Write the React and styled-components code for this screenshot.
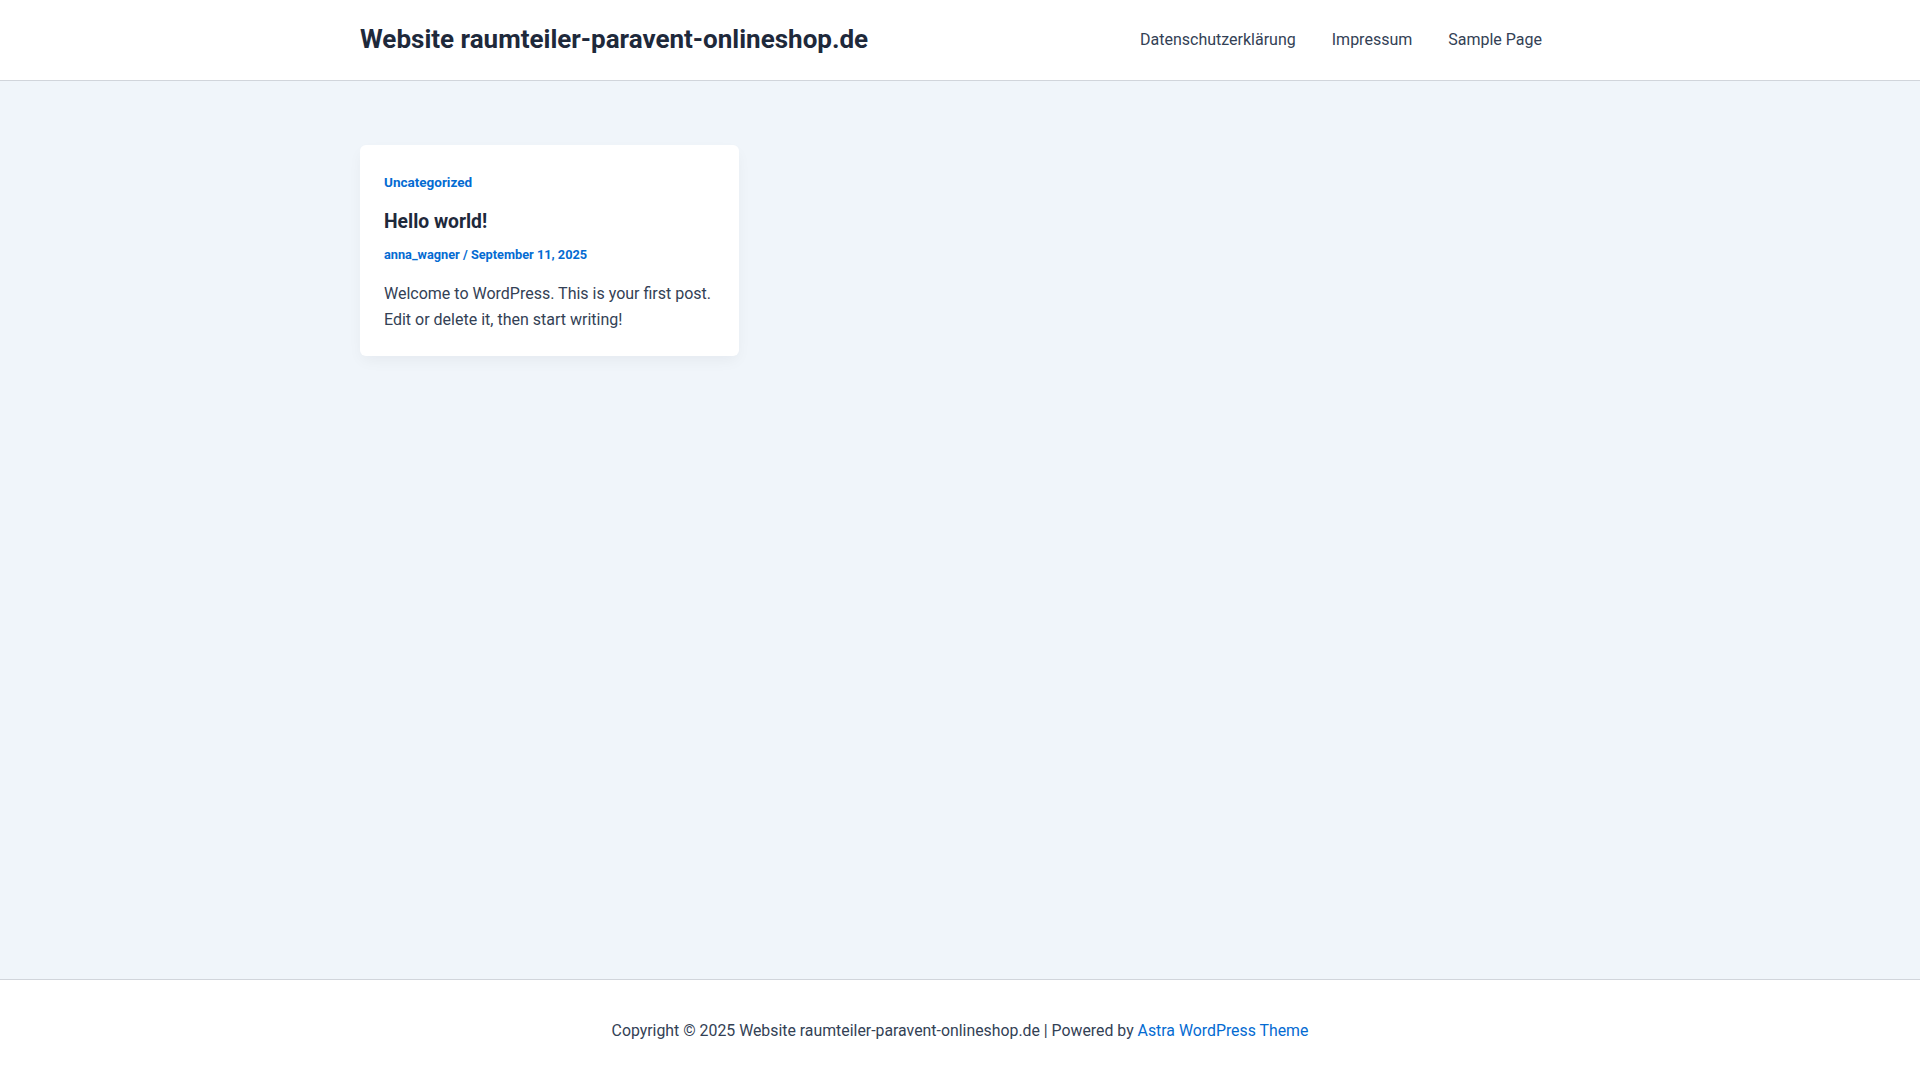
import React from 'react';
import styled, { createGlobalStyle } from 'styled-components';

const GlobalStyle = createGlobalStyle`
  html, body {
    margin: 0;
    padding: 0;
  }
  body {
    font-family: Roboto, "Liberation Sans", sans-serif;
    background: #f0f5fa;
    color: #334155;
    -webkit-font-smoothing: antialiased;
  }
  a {
    text-decoration: none;
  }
`;

const Page = styled.div`
  min-height: 100vh;
  display: flex;
  flex-direction: column;
`;

const Container = styled.div`
  width: 1200px;
  margin: 0 auto;
`;

const Header = styled.header`
  background: #ffffff;
  border-bottom: 1px solid #d1d5db;
`;

const HeaderBar = styled(Container)`
  height: 80px;
  display: flex;
  align-items: center;
  justify-content: space-between;
`;

const SiteTitle = styled.a`
  font-size: 26px;
  font-weight: 700;
  color: #1e293b;
  line-height: 1;
  margin-top: -2px;
`;

const Nav = styled.nav`
  display: flex;
  align-items: center;
`;

const NavLink = styled.a`
  font-size: 16px;
  color: #334155;
  padding: 0 18px;
  line-height: 80px;
`;

const Main = styled.main`
  flex: 1;
  padding: 64px 0;
`;

const Grid = styled(Container)`
  display: grid;
  grid-template-columns: repeat(3, 379px);
  column-gap: 31.5px;
`;

const Card = styled.article`
  background: #ffffff;
  border-radius: 6px;
  padding: 24px;
  box-shadow: 0 6px 15px -2px rgba(16, 24, 40, 0.05);
`;

const Category = styled.a`
  display: block;
  font-size: 13.5px;
  font-weight: 700;
  line-height: 26px;
  color: #046bd2;
`;

const PostTitle = styled.h2`
  margin: 14px 0 0;
  font-size: 19.3px;
  font-weight: 700;
  line-height: 26px;
  color: #1e293b;
`;

const Meta = styled.div`
  margin-top: 7px;
  font-size: 12.75px;
  font-weight: 700;
  line-height: 26px;
  color: #046bd2;

  a {
    color: #046bd2;
  }
`;

const Excerpt = styled.p`
  margin: 13px 0 0;
  font-size: 16px;
  line-height: 25.6px;
  color: #334155;
`;

const Footer = styled.footer`
  background: #ffffff;
  border-top: 1px solid #d1d5db;
  height: 100px;
  display: flex;
  align-items: center;
  justify-content: center;
  font-size: 15.85px;
  color: #334155;
`;

const FooterLink = styled.a`
  color: #046bd2;
`;

const navItems = ['Datenschutzerklärung', 'Impressum', 'Sample Page'];

export default function App() {
  return (
    <Page>
      <GlobalStyle />
      <Header>
        <HeaderBar>
          <SiteTitle href="#">Website raumteiler-paravent-onlineshop.de</SiteTitle>
          <Nav>
            {navItems.map((item) => (
              <NavLink key={item} href="#">{item}</NavLink>
            ))}
          </Nav>
        </HeaderBar>
      </Header>
      <Main>
        <Grid>
          <Card>
            <Category href="#">Uncategorized</Category>
            <PostTitle>Hello world!</PostTitle>
            <Meta>
              <a href="#">anna_wagner</a> / <a href="#">September 11, 2025</a>
            </Meta>
            <Excerpt>
              Welcome to WordPress. This is your first post. Edit or delete it, then start writing!
            </Excerpt>
          </Card>
        </Grid>
      </Main>
      <Footer>
        <span>
          Copyright © 2025 Website raumteiler-paravent-onlineshop.de | Powered by{' '}
          <FooterLink href="#">Astra WordPress Theme</FooterLink>
        </span>
      </Footer>
    </Page>
  );
}
